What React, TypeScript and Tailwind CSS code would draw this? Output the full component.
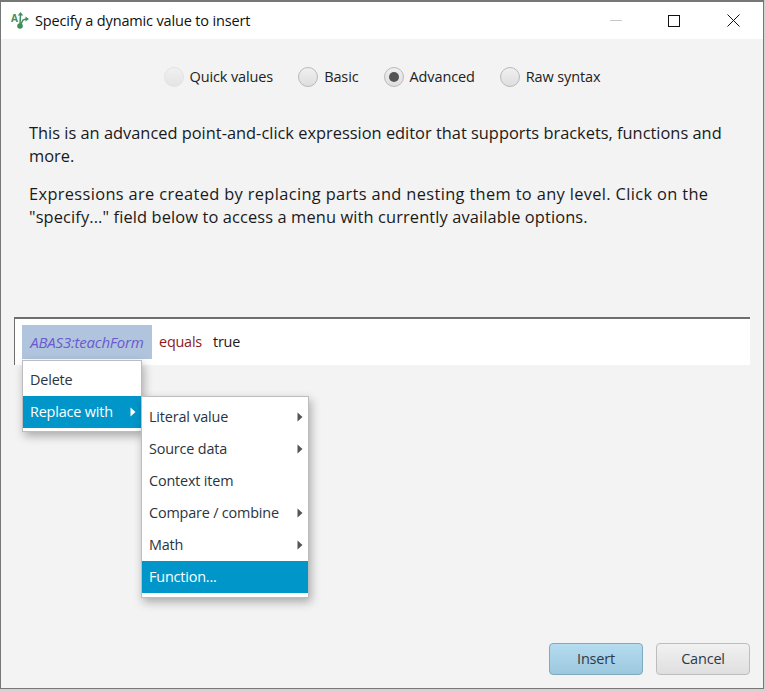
const font = { fontFamily: '"Open Sans", "Noto Sans", sans-serif' };

function Radio({ label, checked, disabled }: { label: string; checked?: boolean; disabled?: boolean }) {
  return (
    <div className="flex items-center gap-[6px]">
      <div
        className={`flex h-[20px] w-[20px] items-center justify-center rounded-full border bg-gradient-to-b from-[#f0f0f0] to-[#dedede] ${
          disabled ? 'border-[#dcdcdc] opacity-70' : 'border-[#b9b9b9]'
        }`}
      >
        {checked && <div className="h-[10px] w-[10px] rounded-full bg-[#555555]" />}
      </div>
      <span className="text-[14.5px] tracking-[-0.12px] text-[#222222]">{label}</span>
    </div>
  );
}

function Arrow({ light }: { light?: boolean }) {
  return (
    <svg width="6" height="10" viewBox="0 0 6 10" className={light ? 'fill-white' : 'fill-[#555555]'}>
      <path d="M0.5 0.5 L5.5 5 L0.5 9.5 Z" />
    </svg>
  );
}

function MenuItem({ label, arrow, active }: { label: string; arrow?: boolean; active?: boolean }) {
  return (
    <div
      className={`flex h-[32px] items-center justify-between pb-[1px] pl-[7px] pr-[5px] text-[14.4px] tracking-[-0.17px] ${
        active ? 'bg-[#0096c9] text-white' : 'text-[#2b3440]'
      }`}
    >
      <span>{label}</span>
      {arrow && <Arrow light={active} />}
    </div>
  );
}

function AppIcon() {
  return (
    <svg width="19" height="19" viewBox="0 0 19 19" className="fill-[#3e8e57] stroke-[#3e8e57]">
      <text x="0" y="11" fontSize="10" fontWeight="700" stroke="none" fontFamily="Open Sans, sans-serif">A</text>
      <circle cx="9" cy="15" r="2.8" stroke="none" />
      <path d="M9 14 L9.5 3" fill="none" strokeWidth="1.5" />
      <path d="M6.8 4.5 L9.5 1 L12.2 4.5 Z" stroke="none" />
      <path d="M9.5 14 L12 9 L15 8" fill="none" strokeWidth="1.5" />
      <path d="M14.5 5.4 L18 8 L14.5 10.6 Z" stroke="none" />
    </svg>
  );
}

export default function App() {
  return (
    <div className="relative h-[691px] w-[766px] overflow-hidden bg-[#d2d2d2] text-[#1a1a1a]" style={font}>
      <div className="flex h-[689px] w-[764px] flex-col border border-t-2 border-[#777777] bg-[#f3f3f3]">
        <div className="flex h-[37px] shrink-0 items-center bg-white pl-[10px]">
          <AppIcon />
          <span className="ml-[5px] text-[14.5px] tracking-[-0.15px] text-[#111111]">Specify a dynamic value to insert</span>
          <div className="ml-auto flex items-center">
            <div className="mr-[46px] h-px w-[12px] bg-[#c8c8c8]" />
            <div className="mr-[47px] h-[12px] w-[12px] border border-[#111111]" />
            <svg width="13" height="13" viewBox="0 0 13 13" className="mr-[23px] stroke-[#111111]">
              <path d="M0.5 0.5 L12.5 12.5 M12.5 0.5 L0.5 12.5" fill="none" strokeWidth="1" />
            </svg>
          </div>
        </div>

        <div className="mt-[27px] flex items-center justify-center gap-[25px]">
          <Radio label="Quick values" disabled />
          <Radio label="Basic" />
          <Radio label="Advanced" checked />
          <Radio label="Raw syntax" />
        </div>

        <div className="mt-[33px] w-[732px] pl-[28px] text-[16.4px] leading-[23px] text-[#1a1a1a]">
          <p>This is an advanced point-and-click expression editor that supports brackets, functions and more.</p>
          <p className="mt-[15px]">
            <span className="block whitespace-nowrap tracking-[0.35px]">Expressions are created by replacing parts and nesting them to any level. Click on the</span>
            <span className="block whitespace-nowrap tracking-[0.12px]">"specify..." field below to access a menu with currently available options.</span>
          </p>
        </div>

        <div className="ml-[13px] mt-[89px] flex h-[48px] w-[736px] items-center border-l border-t-2 border-[#6e6e6e] bg-white pl-[7px] text-[14.4px] tracking-[-0.2px]">
          <div className="flex h-[34px] w-[130px] items-center justify-center bg-[#b0c4de] text-[15px] italic text-[#6a5acd]">ABAS3:teachForm</div>
          <span className="ml-[7px] text-[#8b1a1a]">equals</span>
          <span className="ml-[11px] text-[#1a1a1a]">true</span>
        </div>

        <div className="mb-[13px] mr-[13px] mt-auto flex justify-end gap-[13px] text-[14.5px] tracking-[-0.2px]">
          <button className="h-[32px] w-[94px] rounded-[4px] border border-[#7fa9bf] bg-gradient-to-b from-[#b5dcf0] to-[#9cc8de] text-[#2b3a4a]">Insert</button>
          <button className="h-[32px] w-[94px] rounded-[4px] border border-[#bdbdbd] bg-gradient-to-b from-[#f1f1f1] to-[#dfdfdf] text-[#2b3a4a]">Cancel</button>
        </div>
      </div>

      <div className="absolute left-[22px] top-[360px] w-[120px] border border-[#bdbdbd] bg-white py-[3px] shadow-[2px_4px_9px_rgba(0,0,0,0.3)]">
        <MenuItem label="Delete" />
        <MenuItem label="Replace with" arrow active />
      </div>

      <div className="absolute left-[141px] top-[396px] w-[168px] border border-[#bdbdbd] bg-white py-[4px] shadow-[2px_4px_9px_rgba(0,0,0,0.3)]">
        <MenuItem label="Literal value" arrow />
        <MenuItem label="Source data" arrow />
        <MenuItem label="Context item" />
        <MenuItem label="Compare / combine" arrow />
        <MenuItem label="Math" arrow />
        <MenuItem label="Function..." active />
      </div>
    </div>
  );
}
